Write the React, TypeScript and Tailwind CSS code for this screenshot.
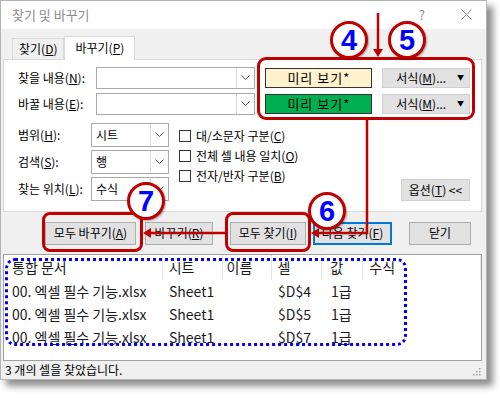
import type { ReactNode } from "react";

// Small chevron used by the combo boxes
const Chevron = () => (
  <svg width="9" height="5" viewBox="0 0 9 5" className="block">
    <polyline points="0.5,0.5 4.5,4.5 8.5,0.5" fill="none" stroke="#555" strokeWidth="1" />
  </svg>
);

const Combo = ({ width, value }: { width: string; value?: string }) => (
  <div className={`flex h-full ${width} border border-[#a9a9a9] bg-white`}>
    <div className="flex-1 flex items-center pl-[4px] text-[12px] text-black">{value}</div>
    <div className="w-[18px] flex items-center justify-center border-l border-[#dcdcdc]">
      <Chevron />
    </div>
  </div>
);

const Btn = ({ children, className = "" }: { children: ReactNode; className?: string }) => (
  <div
    className={`flex items-center justify-center h-[23px] border border-[#adadad] bg-[#e1e1e1] text-[12px] text-black ${className}`}
  >
    {children}
  </div>
);

const Check = ({ children }: { children: ReactNode }) => (
  <div className="flex items-center h-[20px] gap-[5px] text-[12px] text-black">
    <div className="w-[12px] h-[12px] border border-[#333] bg-white" />
    <span>{children}</span>
  </div>
);

const Circle = ({ n, x, y }: { n: number; x: string; y: string }) => (
  <div
    className={`absolute ${x} ${y} w-[38px] h-[38px] rounded-full border-[3px] border-[#c00000] bg-white flex items-center justify-center shadow-[1px_1px_2px_rgba(0,0,0,0.35)]`}
  >
    <span className="font-['Liberation_Sans',sans-serif] font-bold text-[29px] leading-none text-[#0000ff]">{n}</span>
  </div>
);

const rows = [
  { book: "00. 엑셀 필수 기능.xlsx", sheet: "Sheet1", cell: "$D$4", value: "1급" },
  { book: "00. 엑셀 필수 기능.xlsx", sheet: "Sheet1", cell: "$D$5", value: "1급" },
  { book: "00. 엑셀 필수 기능.xlsx", sheet: "Sheet1", cell: "$D$7", value: "1급" },
];

export default function App() {
  return (
    <div className="relative w-[500px] h-[398px] bg-white overflow-hidden font-['Noto_Sans_CJK_KR','Noto_Sans',sans-serif]">
      {/* Dialog window */}
      <div className="w-[487px] h-[380px] border border-[#b4b4b4] bg-[#f0f0f0] shadow-[6px_6px_7px_rgba(0,0,0,0.45)] flex flex-col">
        {/* Title bar */}
        <div className="h-[28px] bg-white flex items-center pl-[11px] pr-[14px] text-[13px] text-[#8c8c8c]">
          <span>찾기 및 바꾸기</span>
          <span className="ml-auto mr-[36px] text-[13px]">?</span>
          <svg width="11" height="11" viewBox="0 0 11 11">
            <path d="M0.5 0.5 L10.5 10.5 M10.5 0.5 L0.5 10.5" stroke="#8c8c8c" strokeWidth="1" />
          </svg>
        </div>

        {/* Tabs */}
        <div className="h-[30px] flex items-end pl-[11px]">
          <div className="h-[21px] px-[6px] flex items-center border border-b-0 border-[#d9d9d9] text-[12px] text-black">
            찾기(<u>D</u>)
          </div>
          <div className="h-[24px] px-[10px] -mb-px flex items-center bg-white border border-b-0 border-[#d9d9d9] text-[12px] text-black relative z-10">
            바꾸기(<u>P</u>)
          </div>
        </div>

        {/* Tab panel */}
        <div className="ml-[2px] mr-[4px] h-[154px] bg-white border border-[#d9d9d9] pl-[14px] pr-[11px] pt-[7px] flex flex-col">
          <div className="flex items-center h-[22px]">
            <div className="w-[78px] text-[12px] text-black">
              찾을 내용(<u>N</u>):
            </div>
            <Combo width="w-[160px]" />
            <div className="ml-[10px] w-[107px] h-[20px] border border-[#333] bg-[#fff2cc] flex items-center justify-center text-[13px] tracking-[1px]">
              미리 보기*
            </div>
            <Btn className="ml-[10px] w-[88px] !h-[20px] border-[#cfcfcf] !justify-start pl-[13px]">
              서식(<u>M</u>)...
              <span className="ml-auto mr-[5px] text-[7px]">▼</span>
            </Btn>
          </div>
          <div className="flex items-center h-[22px] mt-[4px]">
            <div className="w-[78px] text-[12px] text-black">
              바꿀 내용(<u>E</u>):
            </div>
            <Combo width="w-[160px]" />
            <div className="ml-[10px] w-[107px] h-[20px] border border-[#333] bg-[#00b050] flex items-center justify-center text-[13px] tracking-[1px]">
              미리 보기*
            </div>
            <Btn className="ml-[10px] w-[88px] !h-[20px] border-[#cfcfcf] !justify-start pl-[13px]">
              서식(<u>M</u>)...
              <span className="ml-auto mr-[5px] text-[7px]">▼</span>
            </Btn>
          </div>

          <div className="flex mt-[8px]">
            <div className="flex flex-col gap-[3px]">
              <div className="flex items-center h-[24px]">
                <div className="w-[73px] text-[12px] text-black">
                  범위(<u>H</u>):
                </div>
                <Combo width="w-[78px]" value="시트" />
              </div>
              <div className="flex items-center h-[24px]">
                <div className="w-[73px] text-[12px] text-black">
                  검색(<u>S</u>):
                </div>
                <Combo width="w-[78px]" value="행" />
              </div>
              <div className="flex items-center h-[24px]">
                <div className="w-[73px] text-[12px] text-black">
                  찾는 위치(<u>L</u>):
                </div>
                <Combo width="w-[78px]" value="수식" />
              </div>
            </div>
            <div className="flex flex-col ml-[10px] mt-[3px]">
              <Check>
                대/소문자 구분(<u>C</u>)
              </Check>
              <Check>
                전체 셀 내용 일치(<u>O</u>)
              </Check>
              <Check>
                전자/반자 구분(<u>B</u>)
              </Check>
            </div>
            <div className="ml-auto self-end">
              <Btn className="w-[69px] !h-[22px] border-[#cfcfcf]">
                옵션(<u>T</u>) &lt;&lt;
              </Btn>
            </div>
          </div>
        </div>

        {/* Action buttons */}
        <div className="flex items-center mt-[10px] pl-[44px]">
          <Btn className="w-[91px]">
            모두 바꾸기(<u>A</u>)
          </Btn>
          <Btn className="w-[68px] ml-[9px]">
            바꾸기(<u>R</u>)
          </Btn>
          <Btn className="w-[76px] ml-[17px]">
            모두 찾기(<u>I</u>)
          </Btn>
          <Btn className="w-[79px] ml-[7px] !border-[#0078d7] !border-2">
            다음 찾기(<u>F</u>)
          </Btn>
          <Btn className="w-[62px] ml-[17px]">닫기</Btn>
        </div>

        {/* Results list */}
        <div className="mt-[9px] ml-[2px] mr-[4px] h-[108px] bg-white border border-[#a0a0a0] flex flex-col text-[14px] text-[#1a1a1a]">
          <div className="flex h-[25px]">
            <div className="w-[159px] pl-[8px] flex items-center border-r border-[#e5e5e5]">통합 문서</div>
            <div className="w-[60px] pl-[6px] flex items-center border-r border-[#e5e5e5]">시트</div>
            <div className="w-[50px] pl-[4px] flex items-center border-r border-[#e5e5e5]">이름</div>
            <div className="w-[50px] pl-[5px] flex items-center border-r border-[#e5e5e5]">셀</div>
            <div className="w-[41px] pl-[8px] flex items-center border-r border-[#e5e5e5]">값</div>
            <div className="w-[118px] pl-[6px] flex items-center border-r border-[#e5e5e5]">수식</div>
          </div>
          {rows.map((r) => (
            <div key={r.cell} className="flex h-[23px] items-center">
              <div className="w-[159px] pl-[8px] whitespace-nowrap">{r.book}</div>
              <div className="w-[60px] pl-[6px]">{r.sheet}</div>
              <div className="w-[50px] pl-[4px]" />
              <div className="w-[50px] pl-[5px]">{r.cell}</div>
              <div className="w-[41px] pl-[8px]">{r.value}</div>
            </div>
          ))}
        </div>

        {/* Status bar */}
        <div className="flex-1 flex items-center pl-[4px] pr-[4px] text-[12px] text-black relative">
          3 개의 셀을 찾았습니다.
          <svg className="absolute right-[5px] bottom-[3px]" width="9" height="9" viewBox="0 0 9 9">
            <g fill="#a0a0a0">
              <rect x="7" y="1" width="1.5" height="1.5" />
              <rect x="4" y="4" width="1.5" height="1.5" />
              <rect x="7" y="4" width="1.5" height="1.5" />
              <rect x="1" y="7" width="1.5" height="1.5" />
              <rect x="4" y="7" width="1.5" height="1.5" />
              <rect x="7" y="7" width="1.5" height="1.5" />
            </g>
          </svg>
        </div>
      </div>

      {/* Annotation overlay */}
      <div className="absolute left-[257px] top-[57px] w-[218px] h-[63px] rounded-[9px] border-[3px] border-[#c00000]" />
      <div className="absolute left-[42px] top-[212px] w-[101px] h-[40px] rounded-[8px] border-[3px] border-[#c00000]" />
      <div className="absolute left-[225px] top-[212px] w-[86px] h-[40px] rounded-[8px] border-[3px] border-[#c00000]" />
      <div className="absolute left-[5px] top-[258px] w-[402px] h-[88px] rounded-[10px] border-[3px] border-dotted border-[#0000ff]" />

      <svg className="absolute left-0 top-0 pointer-events-none" width="500" height="398" viewBox="0 0 500 398">
        <g stroke="#c00000" strokeWidth="2.5" fill="none">
          <line x1="378" y1="13" x2="378" y2="50" />
          <polyline points="367,120 367,233 318,233" />
          <line x1="225" y1="233" x2="150" y2="233" />
        </g>
        <g fill="#c00000">
          <polygon points="373,49 383,49 378,57" />
          <polygon points="319,228 319,238 311,233" />
          <polygon points="151,228 151,238 143,233" />
        </g>
      </svg>

      <Circle n={4} x="left-[330px]" y="top-[21px]" />
      <Circle n={5} x="left-[388px]" y="top-[21px]" />
      <Circle n={7} x="left-[127px]" y="top-[182px]" />
      <Circle n={6} x="left-[308px]" y="top-[192px]" />
    </div>
  );
}
